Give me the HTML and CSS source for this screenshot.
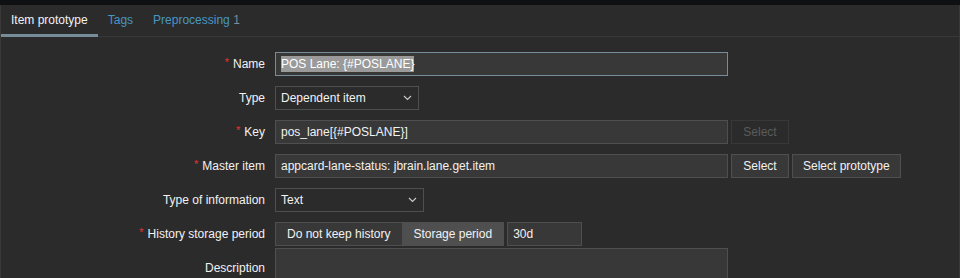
FILE: index.html
```html
<!doctype html>
<html lang="en">
<head>
  <meta charset="utf-8" />
  <title>Item prototype</title>
  <link rel="stylesheet" href="styles.css">
</head>
<body>
  <div class="topbar"></div>
  <div class="panel">
    <ul class="tabs">
      <li class="tab active">Item prototype</li>
      <li class="tab">Tags</li>
      <li class="tab">Preprocessing <span class="count">1</span></li>
    </ul>

    <div class="form">
      <div class="row">
        <label class="lbl req">Name</label>
        <div class="field"><div class="input wide focused"><span class="sel">POS Lane: {#POSLANE}</span></div></div>
      </div>
      <div class="row">
        <label class="lbl">Type</label>
        <div class="field"><div class="select w-type">Dependent item <svg class="chev" width="9" height="6" viewBox="0 0 9 6"><path d="M1 1l3.5 3.5L8 1" fill="none" stroke="#c8c8c8" stroke-width="1.2"/></svg></div></div>
      </div>
      <div class="row">
        <label class="lbl req">Key</label>
        <div class="field">
          <div class="input wide">pos_lane[{#POSLANE}]</div>
          <button class="btn disabled">Select</button>
        </div>
      </div>
      <div class="row">
        <label class="lbl req">Master item</label>
        <div class="field">
          <div class="input wide">appcard-lane-status: jbrain.lane.get.item</div>
          <button class="btn">Select</button>
          <button class="btn">Select prototype</button>
        </div>
      </div>
      <div class="row">
        <label class="lbl">Type of information</label>
        <div class="field"><div class="select w-info">Text <svg class="chev" width="9" height="6" viewBox="0 0 9 6"><path d="M1 1l3.5 3.5L8 1" fill="none" stroke="#c8c8c8" stroke-width="1.2"/></svg></div></div>
      </div>
      <div class="row">
        <label class="lbl req">History storage period</label>
        <div class="field">
          <div class="seg">
            <span class="seg-item">Do not keep history</span>
            <span class="seg-item on">Storage period</span>
          </div>
          <div class="input w-period">30d</div>
        </div>
      </div>
      <div class="row">
        <label class="lbl">Description</label>
        <div class="field"><div class="textarea wide"></div></div>
      </div>
    </div>
  </div>
</body>
</html>
```

FILE: styles.css
```css
html, body { margin:0; padding:0; height:100%; overflow:hidden; background:#2b2b2b;
  font-family:"Liberation Sans",Arial,sans-serif; font-size:12px; color:#f2f2f2; }
.topbar{ height:5px; background:#0e1012; }
.panel{ border-left:1px solid #383838; border-right:1px solid #383838; height:100%; }

.tabs{ display:flex; margin:0; padding:0; list-style:none; height:31px;
  border-bottom:1px solid #383838; }
.tab{ padding:0 10px; line-height:31px; color:#4796c4; }
.tab.active{ color:#f2f2f2; box-shadow:inset 0 -2px 0 #768d99; height:31px; border-bottom:1px solid #768d99; }
.count{ color:#768d99; }

.form{ padding-top:15px; }
.row{ display:flex; align-items:center; height:24px; margin-bottom:10px; }
.lbl{ width:264px; text-align:right; padding-right:10px; flex:none; }
.req::before{ content:"*"; color:#e33734; font-size:11px; margin-right:4px; position:relative; top:-2px; }
.field{ display:flex; gap:3px; align-items:center; }

.input, .select, .textarea{ box-sizing:border-box; height:24px; line-height:22px;
  background:#383838; border:1px solid #4f4f4f; padding:0 5px; white-space:nowrap; }
.wide{ width:453px; }
.focused{ border-color:#768d99; }
.sel{ background:#9a9a9a; color:#fff; padding:1px 0; }
.select{ display:flex; justify-content:space-between; align-items:center; background:#2b2b2b; }
.w-type{ width:144px; }
.w-info{ width:149px; }
.w-period{ width:75px; }
.chev{ margin-right:1px; }
.textarea{ height:40px; }

.btn{ box-sizing:border-box; height:24px; min-width:58px; padding:0 10px;
  background:#383838; border:1px solid #4f4f4f; color:#f2f2f2;
  font:inherit; cursor:pointer; }
.btn.disabled{ background:#2b2b2b; border-color:#383838; color:#5b5b5b; }

.seg{ display:flex; box-sizing:border-box; height:24px; border:1px solid #4f4f4f; }
.seg-item{ line-height:22px; padding:0 12px 0 11px; background:#383838; }
.seg-item.on{ background:#4f4f4f; padding:0 11px; }
```
